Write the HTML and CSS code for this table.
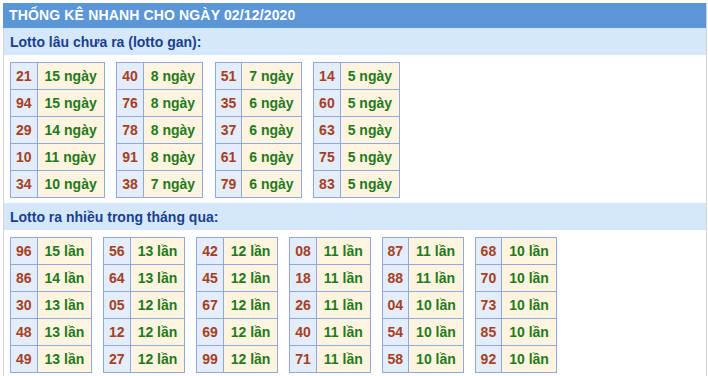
FILE: index.html
```html
<!DOCTYPE html>
<html lang="vi">
<head>
<meta charset="utf-8">
<title>Thống kê nhanh</title>
<link rel="stylesheet" href="styles.css">
</head>
<body>
<div class="box">
  <div class="title">THỐNG KÊ NHANH CHO NGÀY 02/12/2020</div>
  <div class="sub">Lotto lâu chưa ra (lotto gan):</div>
  <div class="tables tables-gan">
    <table class="stat">
      <tr><td class="num">21</td><td class="val">15 ngày</td></tr>
      <tr><td class="num">94</td><td class="val">15 ngày</td></tr>
      <tr><td class="num">29</td><td class="val">14 ngày</td></tr>
      <tr><td class="num">10</td><td class="val">11 ngày</td></tr>
      <tr><td class="num">34</td><td class="val">10 ngày</td></tr>
    </table>
    <table class="stat">
      <tr><td class="num">40</td><td class="val">8 ngày</td></tr>
      <tr><td class="num">76</td><td class="val">8 ngày</td></tr>
      <tr><td class="num">78</td><td class="val">8 ngày</td></tr>
      <tr><td class="num">91</td><td class="val">8 ngày</td></tr>
      <tr><td class="num">38</td><td class="val">7 ngày</td></tr>
    </table>
    <table class="stat">
      <tr><td class="num">51</td><td class="val">7 ngày</td></tr>
      <tr><td class="num">35</td><td class="val">6 ngày</td></tr>
      <tr><td class="num">37</td><td class="val">6 ngày</td></tr>
      <tr><td class="num">61</td><td class="val">6 ngày</td></tr>
      <tr><td class="num">79</td><td class="val">6 ngày</td></tr>
    </table>
    <table class="stat">
      <tr><td class="num">14</td><td class="val">5 ngày</td></tr>
      <tr><td class="num">60</td><td class="val">5 ngày</td></tr>
      <tr><td class="num">63</td><td class="val">5 ngày</td></tr>
      <tr><td class="num">75</td><td class="val">5 ngày</td></tr>
      <tr><td class="num">83</td><td class="val">5 ngày</td></tr>
    </table>
  </div>
  <div class="sub">Lotto ra nhiều trong tháng qua:</div>
  <div class="tables tables-nhieu">
    <table class="stat">
      <tr><td class="num">96</td><td class="val">15 lần</td></tr>
      <tr><td class="num">86</td><td class="val">14 lần</td></tr>
      <tr><td class="num">30</td><td class="val">13 lần</td></tr>
      <tr><td class="num">48</td><td class="val">13 lần</td></tr>
      <tr><td class="num">49</td><td class="val">13 lần</td></tr>
    </table>
    <table class="stat">
      <tr><td class="num">56</td><td class="val">13 lần</td></tr>
      <tr><td class="num">64</td><td class="val">13 lần</td></tr>
      <tr><td class="num">05</td><td class="val">12 lần</td></tr>
      <tr><td class="num">12</td><td class="val">12 lần</td></tr>
      <tr><td class="num">27</td><td class="val">12 lần</td></tr>
    </table>
    <table class="stat">
      <tr><td class="num">42</td><td class="val">12 lần</td></tr>
      <tr><td class="num">45</td><td class="val">12 lần</td></tr>
      <tr><td class="num">67</td><td class="val">12 lần</td></tr>
      <tr><td class="num">69</td><td class="val">12 lần</td></tr>
      <tr><td class="num">99</td><td class="val">12 lần</td></tr>
    </table>
    <table class="stat">
      <tr><td class="num">08</td><td class="val">11 lần</td></tr>
      <tr><td class="num">18</td><td class="val">11 lần</td></tr>
      <tr><td class="num">26</td><td class="val">11 lần</td></tr>
      <tr><td class="num">40</td><td class="val">11 lần</td></tr>
      <tr><td class="num">71</td><td class="val">11 lần</td></tr>
    </table>
    <table class="stat">
      <tr><td class="num">87</td><td class="val">11 lần</td></tr>
      <tr><td class="num">88</td><td class="val">11 lần</td></tr>
      <tr><td class="num">04</td><td class="val">10 lần</td></tr>
      <tr><td class="num">54</td><td class="val">10 lần</td></tr>
      <tr><td class="num">58</td><td class="val">10 lần</td></tr>
    </table>
    <table class="stat">
      <tr><td class="num">68</td><td class="val">10 lần</td></tr>
      <tr><td class="num">70</td><td class="val">10 lần</td></tr>
      <tr><td class="num">73</td><td class="val">10 lần</td></tr>
      <tr><td class="num">85</td><td class="val">10 lần</td></tr>
      <tr><td class="num">92</td><td class="val">10 lần</td></tr>
    </table>
  </div>
</div>
</body>
</html>
```

FILE: styles.css
```css
html, body {
  margin: 0;
  padding: 0;
  background: #ffffff;
}

body {
  padding: 3px 1px 0 3px;
  font-family: "Liberation Sans", Arial, sans-serif;
  font-size: 14px;
  font-weight: bold;
}

.box {
  width: 702px;
  border-left: 1px solid #d4d4d4;
  border-right: 1px solid #d4d4d4;
  min-height: 380px;
}

.title {
  height: 25px;
  line-height: 25px;
  background: #5b96d6;
  color: #ffffff;
  padding-left: 6px;
  margin-left: -1px;
  letter-spacing: 0.15px;
}

.sub {
  height: 27px;
  line-height: 28px;
  background: #d5e8fb;
  color: #1b3f8f;
  padding-left: 6px;
}

.tables {
  display: flex;
  gap: 11.5px;
  padding: 7px 6px 5px 6px;
}

.tables-nhieu {
  gap: 10.8px;
}

.stat {
  border-collapse: collapse;
}

.stat td {
  border: 1px solid #8eaadc;
  height: 26px;
  vertical-align: middle;
  white-space: nowrap;
}

.stat .num {
  background: #e3edfb;
  color: #a63f23;
  padding: 0 5px;
  text-align: center;
}

.stat .val {
  background: #fff4e0;
  color: #1f7a1a;
  padding: 0 7px;
}
```
